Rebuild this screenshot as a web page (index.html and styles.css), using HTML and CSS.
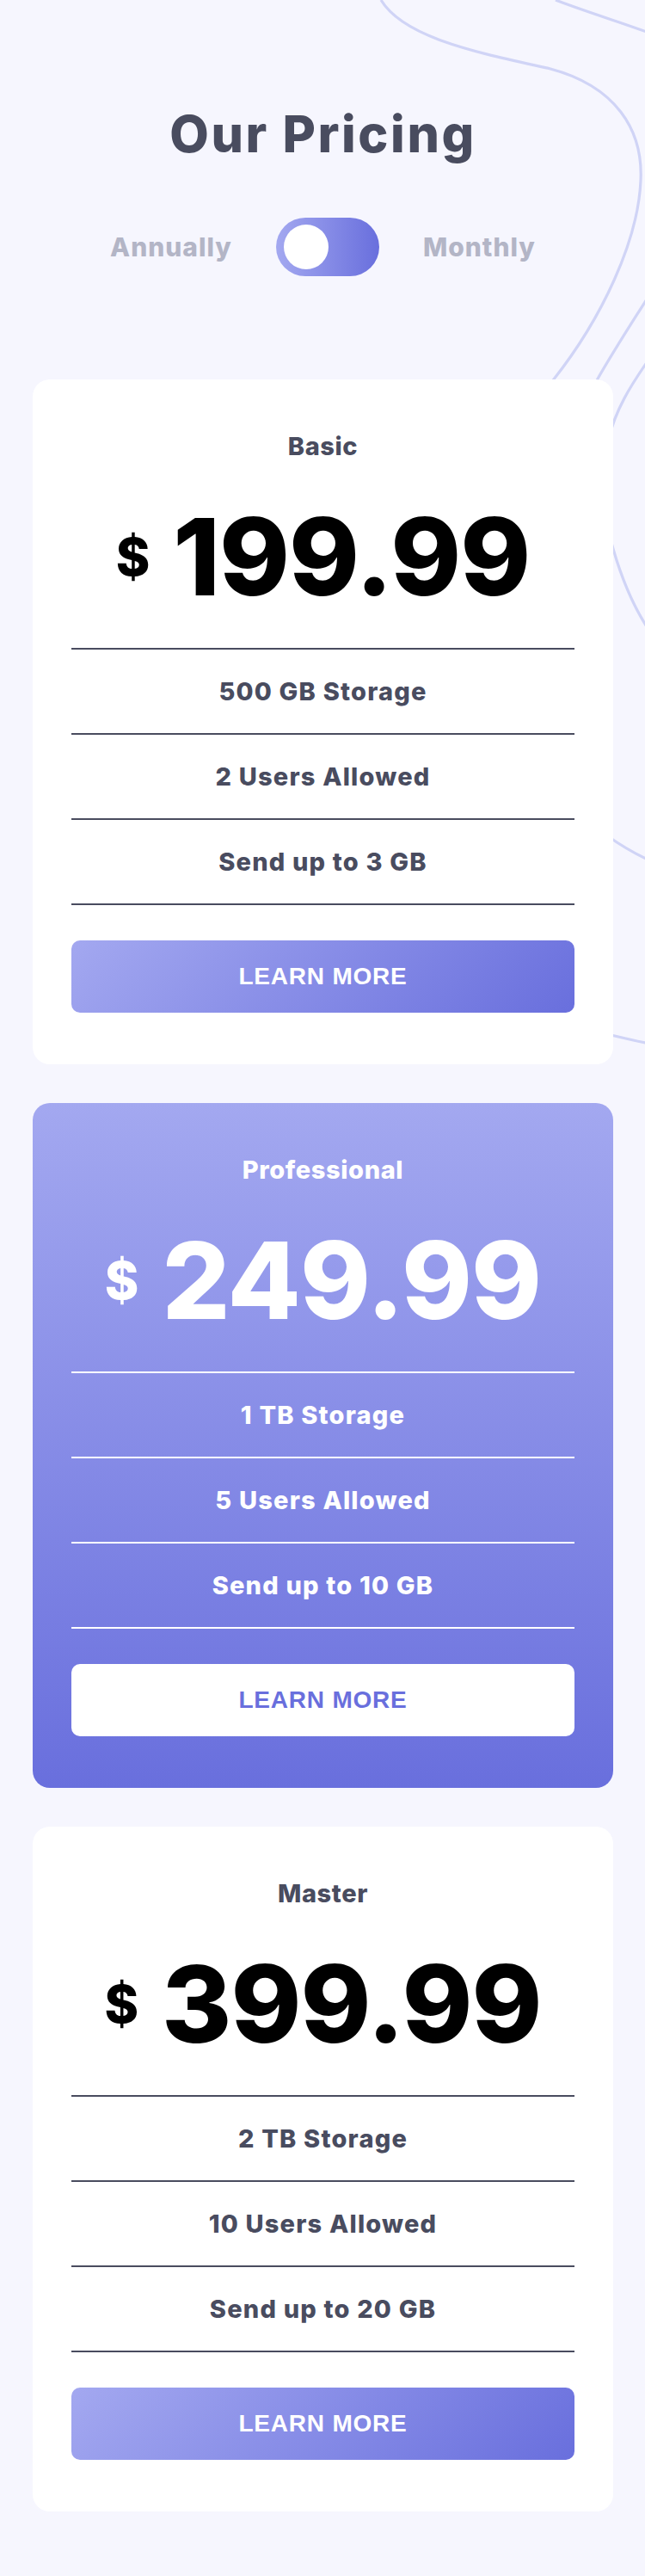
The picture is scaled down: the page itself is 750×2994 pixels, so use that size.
FILE: index.html
```html
<!DOCTYPE html>
<html lang="en">
<head>
<meta charset="utf-8">
<title>Our Pricing</title>
<link rel="stylesheet" href="styles.css">
</head>
<body>
<svg class="bg-lines" viewBox="0 0 750 1300" width="750" height="1300" aria-hidden="true">
  <g fill="none" stroke="#d0d4f6" stroke-width="3.2">
    <path d="M443,0 C470,45 560,62 640,80 C715,100 748,150 745,210 C742,280 700,370 643,442 C610,485 600,540 620,580"/>
    <path d="M646,0 C685,15 720,25 760,40"/>
    <path d="M760,335 C735,375 715,405 694,442"/>
    <path d="M760,410 C735,445 712,480 706,520 C700,570 704,610 713,638 C724,676 738,710 760,740"/>
    <path d="M660,935 C690,960 720,985 760,1002"/>
    <path d="M650,1188 C690,1198 720,1206 760,1214"/>
  </g>
</svg>
<main class="page">
  <header class="head">
    <h1 class="title">Our Pricing</h1>
    <div class="toggle-row">
      <span class="toggle-label">Annually</span>
      <span class="toggle"><span class="knob"></span></span>
      <span class="toggle-label">Monthly</span>
    </div>
  </header>
  <section class="plans">
    <article class="plan">
      <h2 class="plan-name">Basic</h2>
      <p class="price"><span class="currency">$</span>199.99</p>
      <ul class="features">
        <li>500 GB Storage</li>
        <li>2 Users Allowed</li>
        <li>Send up to 3 GB</li>
      </ul>
      <a class="btn" href="#">LEARN MORE</a>
    </article>
    <article class="plan plan--featured">
      <h2 class="plan-name">Professional</h2>
      <p class="price"><span class="currency">$</span>249.99</p>
      <ul class="features">
        <li>1 TB Storage</li>
        <li>5 Users Allowed</li>
        <li>Send up to 10 GB</li>
      </ul>
      <a class="btn" href="#">LEARN MORE</a>
    </article>
    <article class="plan">
      <h2 class="plan-name">Master</h2>
      <p class="price"><span class="currency">$</span>399.99</p>
      <ul class="features">
        <li>2 TB Storage</li>
        <li>10 Users Allowed</li>
        <li>Send up to 20 GB</li>
      </ul>
      <a class="btn" href="#">LEARN MORE</a>
    </article>
  </section>
</main>
</body>
</html>
```
FILE: styles.css
```css
* { box-sizing: border-box; }

html, body {
  margin: 0;
  padding: 0;
}

body {
  position: relative;
  min-height: 2994px;
  background: #f6f6fe;
  font-family: Inter, "Open Sans", "DejaVu Sans", sans-serif;
  font-weight: 800;
  color: #494c5f;
}

.bg-lines {
  position: absolute;
  top: 0;
  left: 0;
  z-index: 0;
  pointer-events: none;
}

.page {
  position: relative;
  z-index: 1;
  padding: 120px 37px 74px 38px;
}

.title {
  margin: 0;
  text-align: center;
  font-size: 59px;
  line-height: 72px;
  font-weight: 800;
  letter-spacing: 2.6px;
  color: #494c5f;
}

.toggle-row {
  display: flex;
  justify-content: center;
  align-items: center;
  gap: 51px;
  margin-top: 61px;
  height: 68px;
}

.toggle-label {
  font-size: 30px;
  letter-spacing: 1px;
  color: #b3b5c6;
}

.toggle {
  display: flex;
  align-items: center;
  width: 120px;
  height: 68px;
  padding: 8px 9px;
  border-radius: 34px;
  background: linear-gradient(to right, #a3a8f0, #696fdd);
}

.knob {
  width: 52px;
  height: 52px;
  border-radius: 50%;
  background: #fff;
}

.plans {
  display: flex;
  flex-direction: column;
  gap: 45px;
  margin-top: 120px;
}

.plan {
  background: #fff;
  border-radius: 20px;
  padding: 60px 45px 60px;
  text-align: center;
}

.plan-name {
  margin: 0;
  font-size: 29px;
  line-height: 36px;
  font-weight: 800;
  letter-spacing: 0.6px;
  color: #494c5f;
}

.price {
  margin: 48px 0 0;
  font-size: 124px;
  line-height: 124px;
  color: #000;
  letter-spacing: -1px;
}

.currency {
  font-size: 60px;
  line-height: 60px;
  vertical-align: 23px;
  margin-right: 28px;
}

.features {
  list-style: none;
  margin: 44px 0 0;
  padding: 0;
  border-top: 2px solid #494c5f;
}

.features li {
  height: 99px;
  line-height: 97px;
  border-bottom: 2px solid #494c5f;
  font-size: 29px;
  letter-spacing: 1.2px;
  color: #494c5f;
}

.btn {
  display: block;
  margin-top: 41px;
  height: 84px;
  line-height: 84px;
  border-radius: 10px;
  background: linear-gradient(135deg, #a3a8f0, #696fdd);
  color: #fff;
  text-decoration: none;
  font-family: "Liberation Sans", Arial, sans-serif;
  font-weight: 700;
  font-size: 28px;
  letter-spacing: 0.8px;
}

.plan--featured {
  background: linear-gradient(180deg, #a3a8f0, #696fdd);
}

.plan--featured .plan-name,
.plan--featured .price,
.plan--featured .features li {
  color: #fff;
}

.plan--featured .features,
.plan--featured .features li {
  border-color: #fff;
}

.plan--featured .btn {
  background: #fff;
  color: #696fdd;
}
```
